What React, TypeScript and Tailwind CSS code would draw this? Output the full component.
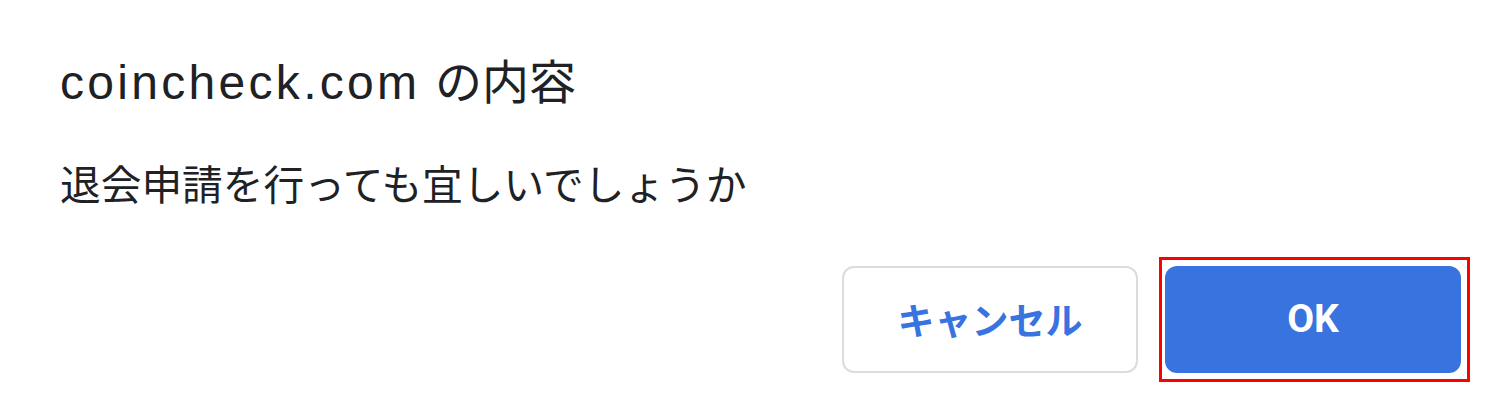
import React from "react";

export default function App() {
  return (
    <div className="w-[1512px] h-[418px] bg-white flex flex-col overflow-hidden">
      <div className="pl-[60px] pt-[55px] text-[#202124]">
        <h1 className="text-[48px] leading-[48px] font-normal whitespace-nowrap">
          <span className="font-['Liberation_Sans','Noto_Sans_CJK_JP',sans-serif] tracking-[3.3px]">coincheck.com</span>
          <span className="font-['Noto_Sans_CJK_JP',sans-serif] text-[47px] ml-[4px]"> の内容</span>
        </h1>
        <p className="mt-[55px] text-[40.7px] leading-[41px] whitespace-nowrap font-['Noto_Sans_CJK_JP',sans-serif]">
          退会申請を行っても宜しいでしょうか
        </p>
      </div>
      <div className="mt-[54px] flex justify-end items-start pr-[42px]">
        <button className="mt-[9px] w-[296px] h-[107px] rounded-[12px] border-2 border-[#dadce0] bg-white text-[#3873df] text-[37px] font-bold font-['Noto_Sans_CJK_JP',sans-serif] flex items-center justify-center">
          キャンセル
        </button>
        <div className="ml-[21px] border-[3px] border-[#ff0000] pt-[6px] pr-[6px] pb-[6px] pl-[3px]">
          <button className="w-[296px] h-[107px] rounded-[12px] bg-[#3873df] text-white text-[39px] font-bold font-['Roboto','Noto_Sans_CJK_JP',sans-serif] flex items-center justify-center">
            OK
          </button>
        </div>
      </div>
    </div>
  );
}
